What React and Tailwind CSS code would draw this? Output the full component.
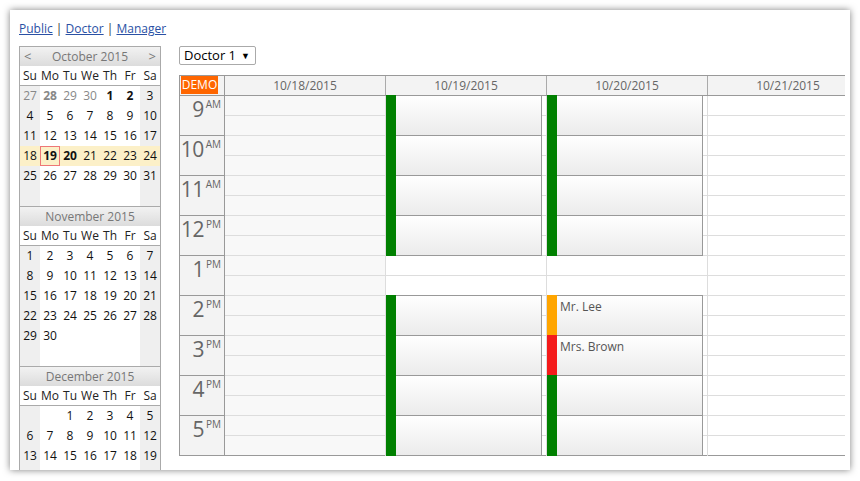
import React from 'react'

const FONT = "font-['Open_Sans','Liberation_Sans',sans-serif]"

const months = [
    {
        title: 'October 2015',
        arrows: true,
        weeks: [
            [{ d: 27, o: 1 }, { d: 28, o: 1, b: 1 }, { d: 29, o: 1 }, { d: 30, o: 1 }, { d: 1, b: 1 }, { d: 2, b: 1 }, { d: 3 }],
            [4, 5, 6, 7, 8, 9, 10],
            [11, 12, 13, 14, 15, 16, 17],
            [{ d: 18, s: 1 }, { d: 19, s: 1, b: 1, t: 1 }, { d: 20, s: 1, b: 1 }, { d: 21, s: 1 }, { d: 22, s: 1 }, { d: 23, s: 1 }, { d: 24, s: 1 }],
            [25, 26, 27, 28, 29, 30, 31],
            [null, null, null, null, null, null, null],
        ],
    },
    {
        title: 'November 2015',
        weeks: [
            [1, 2, 3, 4, 5, 6, 7],
            [8, 9, 10, 11, 12, 13, 14],
            [15, 16, 17, 18, 19, 20, 21],
            [22, 23, 24, 25, 26, 27, 28],
            [29, 30, null, null, null, null, null],
            [null, null, null, null, null, null, null],
        ],
    },
    {
        title: 'December 2015',
        weeks: [
            [null, null, 1, 2, 3, 4, 5],
            [6, 7, 8, 9, 10, 11, 12],
            [13, 14, 15, 16, 17, 18, 19],
            [null, null, null, null, null, null, null],
        ],
    },
]

const dayNames = ['Su', 'Mo', 'Tu', 'We', 'Th', 'Fr', 'Sa']

const hours = [
    ['9', 'AM'], ['10', 'AM'], ['11', 'AM'], ['12', 'PM'], ['1', 'PM'],
    ['2', 'PM'], ['3', 'PM'], ['4', 'PM'], ['5', 'PM'],
]

const columns = [
    { date: '10/18/2015', bg: 'bg-[#f8f8f8]', events: [] },
    {
        date: '10/19/2015', bg: 'bg-white',
        events: [0, 1, 2, 3, 5, 6, 7, 8].map(r => ({ row: r, bar: 'bg-[#008000]' })),
    },
    {
        date: '10/20/2015', bg: 'bg-white',
        events: [
            ...[0, 1, 2, 3].map(r => ({ row: r, bar: 'bg-[#008000]' })),
            { row: 5, bar: 'bg-[#ffa500]', text: 'Mr. Lee' },
            { row: 6, bar: 'bg-[#f41b1b]', text: 'Mrs. Brown' },
            { row: 7, bar: 'bg-[#008000]' },
            { row: 8, bar: 'bg-[#008000]' },
        ],
    },
    { date: '10/21/2015', bg: 'bg-white', events: [] },
]

function Month({ m }) {
    return (
        <div>
            <div className="h-[20px] flex items-center justify-between px-[4px] bg-gradient-to-b from-[#f2f2f2] to-[#dcdcdc] border-t border-[#aaa] text-[12px] text-[#777]">
                <span className="w-[8px] text-[13px]">{m.arrows ? '<' : ''}</span>
                <span>{m.title}</span>
                <span className="w-[8px] text-[13px] text-right">{m.arrows ? '>' : ''}</span>
            </div>
            <div className="h-[20px] grid grid-cols-7 bg-white border-b border-[#aaa] text-[12px] text-[#222]">
                {dayNames.map(n => <div key={n} className="flex items-center justify-center">{n}</div>)}
            </div>
            {m.weeks.map((w, wi) => (
                <div key={wi} className="h-[20px] grid grid-cols-7 text-[12px]">
                    {w.map((c, ci) => {
                        const cell = c && typeof c === 'object' ? c : { d: c }
                        const weekend = ci === 0 || ci === 6
                        const bg = cell.s ? 'bg-[#fcf0c8]' : weekend ? 'bg-[#efefef]' : 'bg-white'
                        return (
                            <div key={ci} className={`flex items-center justify-center ${bg} ${cell.o ? 'text-[#888]' : 'text-[#111]'} ${cell.b ? 'font-bold' : ''} ${cell.t ? 'border border-[#e77]' : ''}`}>
                                {cell.d}
                            </div>
                        )
                    })}
                </div>
            ))}
        </div>
    )
}

export default function App() {
    return (
        <div className={`w-[860px] h-[481px] bg-white pt-[10px] pl-[10px] ${FONT}`}>
            <div className="w-[840px] h-[460px] bg-white shadow-[0_0_7px_rgba(0,0,0,0.5)] overflow-hidden pl-[9px] pt-[10px]">
                <div className="h-[17px] text-[12px] leading-[17px] text-[#333]">
                    <a className="text-[#2a50a4] underline">Public</a> | <a className="text-[#2a50a4] underline">Doctor</a> | <a className="text-[#2a50a4] underline">Manager</a>
                </div>

                <div className="flex mt-[9px]">
                    <div className="w-[142px] shrink-0 border-l border-r border-[#aaa]">
                        {months.map(m => <Month key={m.title} m={m} />)}
                    </div>

                    <div className="ml-[18px]">
                        <div className="w-[77px] h-[19px] border border-[#aaa] rounded-[2px] flex items-center justify-between pl-[4px] pr-[5px] text-[13px] text-black">
                            <span>Doctor 1</span>
                            <span className="text-[9px]">▼</span>
                        </div>

                        <div className="mt-[10px] w-[666px] overflow-hidden border-t border-l border-[#999]">
                            <div className="flex h-[20px] border-b border-[#999] bg-[#f3f3f3] text-[12px] text-[#666]">
                                <div className="w-[45px] shrink-0 border-r border-[#999] pl-[1px]">
                                    <div className="w-[37px] h-[18px] bg-[#ff6600] text-white text-[12px] leading-[18px] text-center">DEMO</div>
                                </div>
                                {columns.map(c => (
                                    <div key={c.date} className="w-[161px] shrink-0 border-r border-[#aaa] flex items-center justify-center">
                                        {c.date}
                                    </div>
                                ))}
                            </div>

                            <div className="flex">
                                <div className="w-[45px] shrink-0 border-r border-[#999] bg-[#f3f3f3]">
                                    {hours.map(([h, ap]) => (
                                        <div key={h} className="h-[40px] border-b border-[#999] flex justify-end pr-[3px] pt-[2px] text-[#666]">
                                            <span className="text-[21px] leading-[22px] tracking-[-0.5px]">{h}</span>
                                            <span className="text-[10px] leading-[10px] ml-[2px] mt-[1px]">{ap}</span>
                                        </div>
                                    ))}
                                </div>

                                {columns.map(c => (
                                    <div key={c.date} className={`relative w-[161px] shrink-0 border-r border-[#ddd] ${c.bg}`}>
                                        {Array.from({ length: 18 }).map((_, i) => (
                                            <div key={i} className={`h-[20px] border-b ${i === 17 ? 'border-[#999]' : 'border-[#ddd]'}`} />
                                        ))}
                                        {c.events.map(e => (
                                            <div
                                                key={e.row}
                                                className="absolute left-0 right-[4px] h-[41px] flex"
                                                style={{ top: e.row * 40 - 1 }}
                                            >
                                                <div className={`w-[10px] shrink-0 ${e.bar}`} />
                                                <div className="flex-1 border-t border-r border-b border-[#999] bg-gradient-to-b from-white to-[#ebebeb] px-[3px] pt-[2px] text-[12px] text-[#555]">
                                                    {e.text}
                                                </div>
                                            </div>
                                        ))}
                                    </div>
                                ))}
                            </div>
                        </div>
                    </div>
                </div>
            </div>
        </div>
    )
}
